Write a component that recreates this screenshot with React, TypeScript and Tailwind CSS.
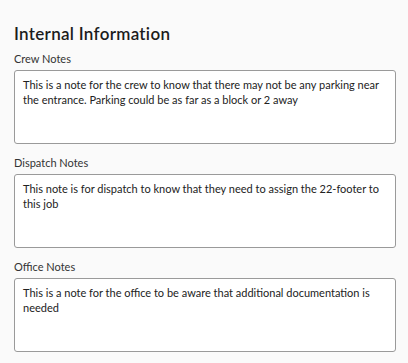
import React from "react";

const notes = [
  {
    label: "Crew Notes",
    text: "This is a note for the crew to know that there may not be any parking near the entrance. Parking could be as far as a block or 2 away",
  },
  {
    label: "Dispatch Notes",
    text: "This note is for dispatch to know that they need to assign the 22-footer to this job",
  },
  {
    label: "Office Notes",
    text: "This is a note for the office to be aware that additional documentation is needed",
  },
];

export default function App() {
  return (
    <div
      className="min-h-[363px] w-[408px] bg-[#fafafa] px-[14px] pt-[24px]"
      style={{ fontFamily: "Lato, 'Noto Sans', sans-serif" }}
    >
      <h2 className="text-[17px] leading-[20px] font-semibold tracking-[0.3px] text-[#1c1c1c]">Internal Information</h2>
      <div className="mt-[8px] flex flex-col gap-[12px]">
        {notes.map((n) => (
          <div key={n.label} className="flex flex-col gap-[4px]">
            <label className="text-[11px] leading-[14px] text-[#333]">{n.label}</label>
            <textarea
              readOnly
              value={n.text}
              className="h-[74px] w-[382px] resize-none rounded-[3px] border border-[#9a9a9a] bg-white px-[8px] pt-[6px] text-[11px] leading-[15px] text-[#222] outline-none"
              style={{ fontFamily: "Lato, 'Noto Sans', sans-serif" }}
            />
          </div>
        ))}
      </div>
    </div>
  );
}
